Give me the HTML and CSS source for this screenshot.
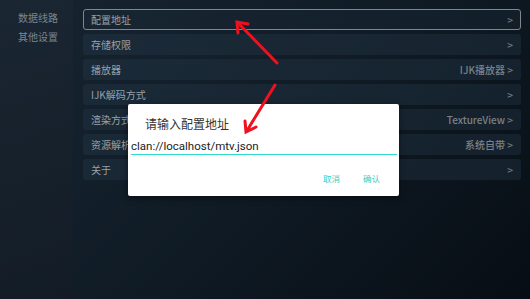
FILE: index.html
```html
<!DOCTYPE html>
<html lang="zh-cn">
<head>
    <meta charset="UTF-8">
    <meta name="viewport" content="width=device-width, initial-scale=1.0">
    <title>设置</title>
    <link rel="stylesheet" href="styles.css">
</head>
<body>
    <div class="screen">
        <div class="sidebar">
            <div class="side-item">数据线路</div>
            <div class="side-item">其他设置</div>
        </div>
        <div class="main">
            <div class="row focused"><span>配置地址</span><span class="value">&gt;</span></div>
            <div class="row"><span>存储权限</span><span class="value">&gt;</span></div>
            <div class="row"><span>播放器</span><span class="value">IJK播放器 &gt;</span></div>
            <div class="row"><span>IJK解码方式</span><span class="value">&gt;</span></div>
            <div class="row"><span>渲染方式</span><span class="value">TextureView &gt;</span></div>
            <div class="row"><span>资源解析</span><span class="value">系统自带 &gt;</span></div>
            <div class="row"><span>关于</span><span class="value">&gt;</span></div>
        </div>

        <div class="dialog">
            <div class="dialog-title">请输入配置地址</div>
            <div class="dialog-input">clan://localhost/mtv.json</div>
            <div class="dialog-buttons">
                <span class="btn">取消</span>
                <span class="btn">确认</span>
            </div>
        </div>

        <!-- 标注箭头 -->
        <svg class="arrows" width="530" height="299" viewBox="0 0 530 299">
            <g stroke="#f0101e" stroke-width="3" stroke-linecap="round" fill="none">
                <line x1="277" y1="63" x2="240" y2="25"/>
                <polyline points="238,33 237,22 248,24"/>
                <line x1="275" y1="85" x2="248" y2="129"/>
                <polyline points="245,121 246,132 256,127"/>
            </g>
        </svg>
    </div>
</body>
</html>
```

FILE: styles.css
```css
body {
    margin: 0;
    padding: 0;
    font-family: "Noto Sans CJK SC", "Noto Sans", sans-serif;
    background-color: #0b131b;
}
.screen {
    position: relative;
    width: 530px;
    height: 299px;
    display: flex;
    overflow: hidden;
}
.sidebar {
    width: 73px;
    background: linear-gradient(160deg, #1a2632 0%, #131c26 100%);
    padding-top: 8px;
    box-sizing: border-box;
}
.side-item {
    color: #7d858d;
    font-size: 10px;
    height: 19px;
    line-height: 19px;
    padding-left: 18px;
}
.main {
    flex: 1;
    background: linear-gradient(135deg, #16232f 0%, #0f1a24 50%, #070d14 100%);
    padding: 9px 9px 0 10px;
    display: flex;
    flex-direction: column;
    gap: 4px;
}
.row {
    height: 21px;
    box-sizing: border-box;
    display: flex;
    justify-content: space-between;
    align-items: center;
    padding: 0 8px;
    background-color: rgba(40, 60, 78, 0.35);
    border-radius: 3px;
    color: #9aa1a8;
    font-size: 10px;
}
.row.focused {
    border: 1px solid #7f868d;
    background-color: rgba(30, 45, 60, 0.3);
    padding: 0 7px;
}
.value {
    color: #7a8188;
    font-weight: 500;
}
.dialog {
    position: absolute;
    left: 128px;
    top: 104px;
    width: 271px;
    height: 92px;
    background: #fff;
    border-radius: 2px;
    box-shadow: 0 2px 6px rgba(0, 0, 0, 0.5);
    box-sizing: border-box;
    padding: 12px 2px 0 3px;
}
.dialog-title {
    font-size: 12px;
    color: #333;
    padding-left: 14px;
    line-height: 16px;
}
.dialog-input {
    margin-top: 6px;
    font-family: Roboto, "Noto Sans", sans-serif;
    font-size: 11.5px;
    color: #222;
    line-height: 16px;
    border-bottom: 1.5px solid #2fd9cc;
}
.dialog-buttons {
    display: flex;
    justify-content: flex-end;
    gap: 23px;
    padding: 17px 17px 0 0;
}
.btn {
    font-size: 8.5px;
    color: #35cfc4;
}
.arrows {
    position: absolute;
    left: 0;
    top: 0;
}
```
